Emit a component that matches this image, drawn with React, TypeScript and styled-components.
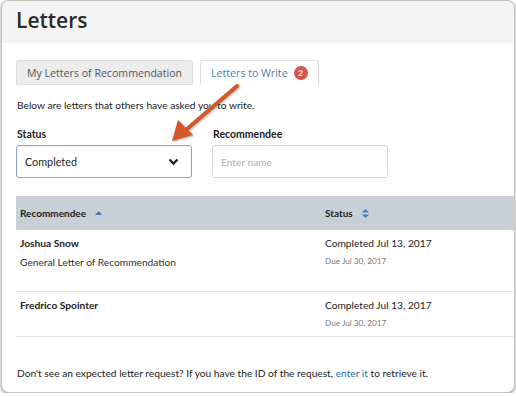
import React, { FC } from 'react';
import styled, { createGlobalStyle } from 'styled-components';

const GlobalStyle = createGlobalStyle`
    body {
        margin: 0;
        background: #fff;
        font-family: Lato, "Liberation Sans", sans-serif;
        color: #333;
    }
`;

type Row = {
    name: string,
    kind?: string,
    completed: string,
    due: string
}

const rows: Row[] = [
    { name: 'Joshua Snow', kind: 'General Letter of Recommendation', completed: 'Completed Jul 13, 2017', due: 'Due Jul 30, 2017' },
    { name: 'Fredrico Spointer', completed: 'Completed Jul 13, 2017', due: 'Due Jul 30, 2017' },
];

const App: FC = () => {
    return (
        <>
            <GlobalStyle />
            <Frame>
                <Header>
                    <Title>Letters</Title>
                </Header>
                <Content>
                    <Tabs>
                        <Tab>My Letters of Recommendation</Tab>
                        <Tab active>
                            Letters to Write
                            <Badge>2</Badge>
                        </Tab>
                    </Tabs>
                    <Intro>Below are letters that others have asked you to write.</Intro>
                    <Filters>
                        <Field>
                            <Label>Status</Label>
                            <Select>
                                <span>Completed</span>
                                <svg width="11" height="8" viewBox="0 0 11 8">
                                    <path d="M1.5 1.5 L5.5 5.5 L9.5 1.5" fill="none" stroke="#222" strokeWidth="2.4" />
                                </svg>
                            </Select>
                        </Field>
                        <Field>
                            <Label>Recommendee</Label>
                            <Input placeholder="Enter name" />
                        </Field>
                    </Filters>
                    <Table>
                        <HeadRow>
                            <HeadCell>
                                Recommendee
                                <svg width="7" height="4" viewBox="0 0 7 4">
                                    <path d="M0 4 L3.5 0 L7 4 Z" fill="#3f7fb5" />
                                </svg>
                            </HeadCell>
                            <HeadCell>
                                Status
                                <svg width="7" height="9" viewBox="0 0 7 9">
                                    <path d="M0 3.5 L3.5 0 L7 3.5 Z M0 5.5 L3.5 9 L7 5.5 Z" fill="#3f7fb5" />
                                </svg>
                            </HeadCell>
                        </HeadRow>
                        {rows.map(r => (
                            <BodyRow key={r.name}>
                                <Cell>
                                    <Name>{r.name}</Name>
                                    {r.kind && <Kind>{r.kind}</Kind>}
                                </Cell>
                                <Cell>
                                    <Completed>{r.completed}</Completed>
                                    <Due>{r.due}</Due>
                                </Cell>
                            </BodyRow>
                        ))}
                    </Table>
                    <Footer>
                        Don't see an expected letter request? If you have the ID of the request, <a href="#">enter it</a> to retrieve it.
                    </Footer>
                </Content>
                <Arrow width="80" height="70" viewBox="0 0 80 70">
                    <line x1="72" y1="5" x2="22" y2="48" stroke="#d4582a" strokeWidth="4" strokeLinecap="round" />
                    <path d="M7 60 L13 39 L28 54 Z" fill="#d4582a" />
                </Arrow>
            </Frame>
        </>
    );
};

const Frame = styled.div`
    position: relative;
    margin-left: 1px;
    width: 512px;
    height: 391px;
    border: 1px solid #c4c4c4;
    border-radius: 8px;
    box-shadow: 0 1px 3px rgba(0, 0, 0, 0.45);
    overflow: hidden;
    background: #fff;
`;

const Header = styled.div`
    height: 42px;
    background: #f4f4f4;
    padding-left: 14px;
    display: flex;
    align-items: center;
`;

const Title = styled.h1`
    margin: 0 0 5px 0;
    font-family: "Open Sans", sans-serif;
    font-weight: 600;
    font-size: 21px;
    color: #2b2b2b;
`;

const Content = styled.div`
    padding: 17px 0 0 14px;
`;

const Tabs = styled.div`
    display: flex;
    gap: 7px;
`;

const Tab = styled.div<{ active?: boolean }>`
    height: 23px;
    padding: 0 10px;
    display: flex;
    align-items: center;
    gap: 6px;
    font-family: "Open Sans", sans-serif;
    font-size: 10.6px;
    color: ${p => p.active ? '#4a7fa8' : '#555'};
    background: ${p => p.active ? '#fff' : '#ececec'};
    border: 1px solid #ddd;
    border-bottom: ${p => p.active ? 'none' : '1px solid #ddd'};
    border-radius: 3px 3px 0 0;
`;

const Badge = styled.span`
    width: 14px;
    height: 14px;
    border-radius: 50%;
    background: #d9534f;
    color: #fff;
    font-family: Lato, sans-serif;
    font-weight: 700;
    font-size: 8px;
    display: flex;
    align-items: center;
    justify-content: center;
`;

const Intro = styled.p`
    margin: 14px 0 0 1px;
    font-size: 10.2px;
    color: #222;
`;

const Filters = styled.div`
    display: flex;
    gap: 20px;
    margin-top: 17px;
`;

const Field = styled.div`
    display: flex;
    flex-direction: column;
`;

const Label = styled.div`
    font-size: 10.5px;
    font-weight: 700;
    color: #222;
    margin: 0 0 5px 1px;
`;

const Select = styled.div`
    width: 176px;
    height: 33px;
    box-sizing: border-box;
    border: 1px solid #93a3b5;
    border-radius: 3px;
    padding: 0 12px 0 8px;
    display: flex;
    align-items: center;
    justify-content: space-between;
    font-size: 10.8px;
    color: #222;
    box-shadow: inset 0 1px 2px rgba(0, 0, 0, 0.06);
`;

const Input = styled.input`
    width: 176px;
    height: 33px;
    box-sizing: border-box;
    border: 1px solid #d6d6d6;
    border-radius: 3px;
    padding: 0 8px;
    font-family: Lato, sans-serif;
    font-size: 10.2px;
    outline: none;
    &::placeholder {
        color: #b2b2b2;
    }
`;

const Table = styled.div`
    margin-top: 18px;
`;

const HeadRow = styled.div`
    display: grid;
    grid-template-columns: 305px 1fr;
    height: 34px;
    background: #c9cfd6;
`;

const HeadCell = styled.div`
    display: flex;
    align-items: center;
    gap: 9px;
    padding-left: 4px;
    font-size: 10px;
    font-weight: 700;
    color: #222;
`;

const BodyRow = styled.div`
    display: grid;
    grid-template-columns: 305px 1fr;
    height: 61px;
    border-bottom: 1px solid #e2e2e2;
    &:last-child {
        height: 44px;
    }
`;

const Cell = styled.div`
    padding: 6px 0 0 4px;
`;

const Name = styled.div`
    font-size: 10.2px;
    font-weight: 700;
    color: #222;
    line-height: 14px;
`;

const Kind = styled.div`
    margin-top: 5px;
    font-size: 10.2px;
    color: #333;
    line-height: 14px;
`;

const Completed = styled.div`
    font-size: 10.2px;
    color: #222;
    line-height: 14px;
`;

const Due = styled.div`
    margin-top: 5px;
    font-size: 8.2px;
    color: #777;
    line-height: 12px;
`;

const Footer = styled.p`
    margin: 30px 0 0 1px;
    font-size: 10.2px;
    color: #222;
    a {
        color: #2f6f9f;
        text-decoration: none;
    }
`;

const Arrow = styled.svg`
    position: absolute;
    left: 163px;
    top: 80px;
    filter: drop-shadow(1px 1px 1px rgba(0, 0, 0, 0.3));
`;

export default App;
